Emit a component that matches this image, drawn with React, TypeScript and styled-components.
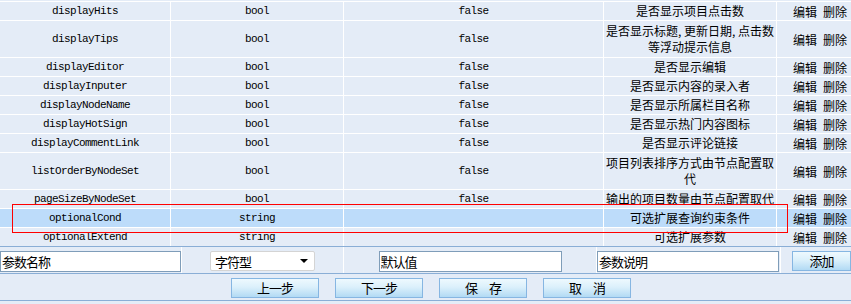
import * as React from 'react'
import styled, { createGlobalStyle } from 'styled-components'

type Param = {
  name: string
  type: string
  value: string
  desc: string
  tall?: boolean
  active?: boolean
}

const params: Param[] = [
  { name: 'displayHits', type: 'bool', value: 'false', desc: '是否显示项目点击数' },
  { name: 'displayTips', type: 'bool', value: 'false', desc: '是否显示标题, 更新日期, 点击数等浮动提示信息', tall: true },
  { name: 'displayEditor', type: 'bool', value: 'false', desc: '是否显示编辑' },
  { name: 'displayInputer', type: 'bool', value: 'false', desc: '是否显示内容的录入者' },
  { name: 'displayNodeName', type: 'bool', value: 'false', desc: '是否显示所属栏目名称' },
  { name: 'displayHotSign', type: 'bool', value: 'false', desc: '是否显示热门内容图标' },
  { name: 'displayCommentLink', type: 'bool', value: 'false', desc: '是否显示评论链接' },
  { name: 'listOrderByNodeSet', type: 'bool', value: 'false', desc: '项目列表排序方式由节点配置取代', tall: true },
  { name: 'pageSizeByNodeSet', type: 'bool', value: 'false', desc: '输出的项目数量由节点配置取代' },
  { name: 'optionalCond', type: 'string', value: '', desc: '可选扩展查询约束条件', active: true },
  { name: 'optionalExtend', type: 'string', value: '', desc: '可选扩展参数' }
]

const App: React.FC = () => {
  return (
    <>
      <GlobalStyle />
      <Page>
        <Table>
          {params.map(p => (
            <Row key={p.name} $tall={p.tall} $active={p.active}>
              <CodeCell>{p.name}</CodeCell>
              <CodeCell>{p.type}</CodeCell>
              <CodeCell>{p.value}</CodeCell>
              <DescCell>{p.desc}</DescCell>
              <ActionCell>
                <span>编辑</span>
                <span>删除</span>
              </ActionCell>
            </Row>
          ))}
        </Table>

        <AddRow>
          <AddCell>
            <TextInput defaultValue="参数名称" $width={181} />
          </AddCell>
          <AddCell $center>
            <FakeSelect>
              <span>字符型</span>
              <svg width="8" height="4" viewBox="0 0 8 4">
                <path d="M0 0 H8 L4 4 Z" fill="#000" />
              </svg>
            </FakeSelect>
          </AddCell>
          <AddCell $center>
            <TextInput defaultValue="默认值" $width={183} />
          </AddCell>
          <AddCell>
            <TextInput defaultValue="参数说明" $width={182} />
          </AddCell>
          <AddCell $padLeft={11}>
            <BlueButton $width={59}>添加</BlueButton>
          </AddCell>
        </AddRow>

        <ButtonBar>
          <BlueButton $width={88}>上一步</BlueButton>
          <BlueButton $width={88}>下一步</BlueButton>
          <BlueButton $width={88}>保　存</BlueButton>
          <BlueButton $width={88}>取　消</BlueButton>
        </ButtonBar>

        <Marker />
      </Page>
    </>
  )
}

const GlobalStyle = createGlobalStyle`
  html, body {
    margin: 0;
    padding: 0;
  }
  body {
    width: 851px;
    height: 304px;
    overflow: hidden;
    background: #e4ecf7;
    color: #000;
    font-family: "Noto Sans CJK SC", sans-serif;
    font-size: 12px;
  }
`

const Page = styled.div`
  position: relative;
  padding-top: 1px;
`

const Table = styled.div`
  display: flex;
  flex-direction: column;
  gap: 1px;
  padding-top: 1px;
  background: #ffffff;
`

const Row = styled.div<{ $tall?: boolean; $active?: boolean }>`
  display: grid;
  grid-template-columns: 170px 172px 259px 172px 1fr;
  column-gap: 1px;
  height: ${p => (p.$tall ? 36 : 18)}px;

  & > * {
    background: ${p => (p.$active ? '#bddcfa' : '#e4ecf7')};
  }
`

const CodeCell = styled.div`
  display: flex;
  align-items: center;
  justify-content: center;
  font-family: "Liberation Mono", "DejaVu Sans Mono", monospace;
  font-size: 11px;
  letter-spacing: -0.6px;
  white-space: nowrap;
`

const DescCell = styled.div`
  display: flex;
  align-items: center;
  justify-content: center;
  padding: 0 1px;
  text-align: center;
  line-height: 16px;
`

const ActionCell = styled.div`
  display: flex;
  align-items: center;
  gap: 6px;
  padding-left: 16px;
  white-space: nowrap;
`

const AddRow = styled.div`
  display: grid;
  grid-template-columns: 181px 161px 252px 183px 1fr;
  column-gap: 1px;
  height: 26px;
  background: #ffffff;
  border-top: 1px solid #8aaed6;
  border-bottom: 1px solid #8aaed6;
`

const AddCell = styled.div<{ $center?: boolean; $padLeft?: number }>`
  display: flex;
  align-items: flex-start;
  justify-content: ${p => (p.$center ? 'center' : 'flex-start')};
  padding-top: 4px;
  padding-left: ${p => p.$padLeft ?? 0}px;
  background: #e4ecf7;
`

const TextInput = styled.input<{ $width: number }>`
  box-sizing: border-box;
  width: ${p => p.$width}px;
  height: 21px;
  margin: 0;
  padding: 0 1px;
  border: 1px solid #7f9db9;
  background: #ffffff;
  color: #000;
  font-family: "Noto Sans CJK SC", sans-serif;
  font-size: 13px;
  letter-spacing: -1px;
  outline: none;
`

const FakeSelect = styled.div`
  box-sizing: border-box;
  display: flex;
  align-items: center;
  justify-content: space-between;
  width: 105px;
  height: 20px;
  padding: 0 6px 0 4px;
  border: 1px solid #d4d4d4;
  border-radius: 2px;
  background: #ffffff;
  font-size: 13px;
  letter-spacing: -1px;
`

const BlueButton = styled.button<{ $width: number }>`
  box-sizing: border-box;
  width: ${p => p.$width}px;
  height: 20px;
  margin: 0;
  padding: 0;
  border: 1px solid #86b6e2;
  background: linear-gradient(#eef9fe 0%, #dbf0fb 45%, #b2daf4 100%);
  color: #000;
  font-family: "Noto Sans CJK SC", sans-serif;
  font-size: 13px;
  letter-spacing: -1px;
  line-height: 18px;
`

const ButtonBar = styled.div`
  display: flex;
  justify-content: center;
  gap: 16px;
  height: 27px;
  box-sizing: border-box;
  padding: 4px 0 0 11px;
  border-bottom: 1px solid #8aaed6;
`

const Marker = styled.div`
  position: absolute;
  left: 12px;
  top: 204px;
  width: 776px;
  height: 29px;
  border: 1px solid #ff0000;
  box-sizing: border-box;
  pointer-events: none;
`

export default App
